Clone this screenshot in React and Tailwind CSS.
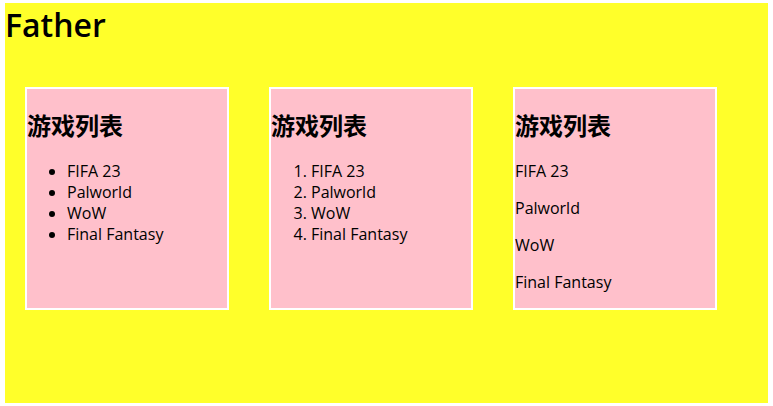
const games = ["FIFA 23", "Palworld", "WoW", "Final Fantasy"];

function Card({ children }) {
  return (
    <section className="min-h-[223px] w-[204px] shrink-0 border-2 border-white bg-[#ffc0cb]">
      <h2 className="mt-5 mb-[18px] text-2xl leading-[34px] font-bold">游戏列表</h2>
      {children}
    </section>
  );
}

export default function App() {
  return (
    <div className="bg-white px-[5px] py-[3px] font-['Open_Sans','Noto_Sans_CJK_SC',sans-serif] text-base text-black">
      <main className="min-h-[400px] bg-[#ffff2a]">
        <h1 className="text-[32px] leading-[43px] font-semibold">Father</h1>
        <div className="mt-[41px] flex gap-10 pl-5">
          <Card>
            <ul className="list-disc pl-10 leading-[21px]">
              {games.map((game) => <li key={game}>{game}</li>)}
            </ul>
          </Card>
          <Card>
            <ol className="list-decimal pl-10 leading-[21px]">
              {games.map((game) => <li key={game}>{game}</li>)}
            </ol>
          </Card>
          <Card>
            <div className="flex flex-col gap-4 leading-[21px]">
              {games.map((game) => <p key={game}>{game}</p>)}
            </div>
          </Card>
        </div>
      </main>
    </div>
  );
}
